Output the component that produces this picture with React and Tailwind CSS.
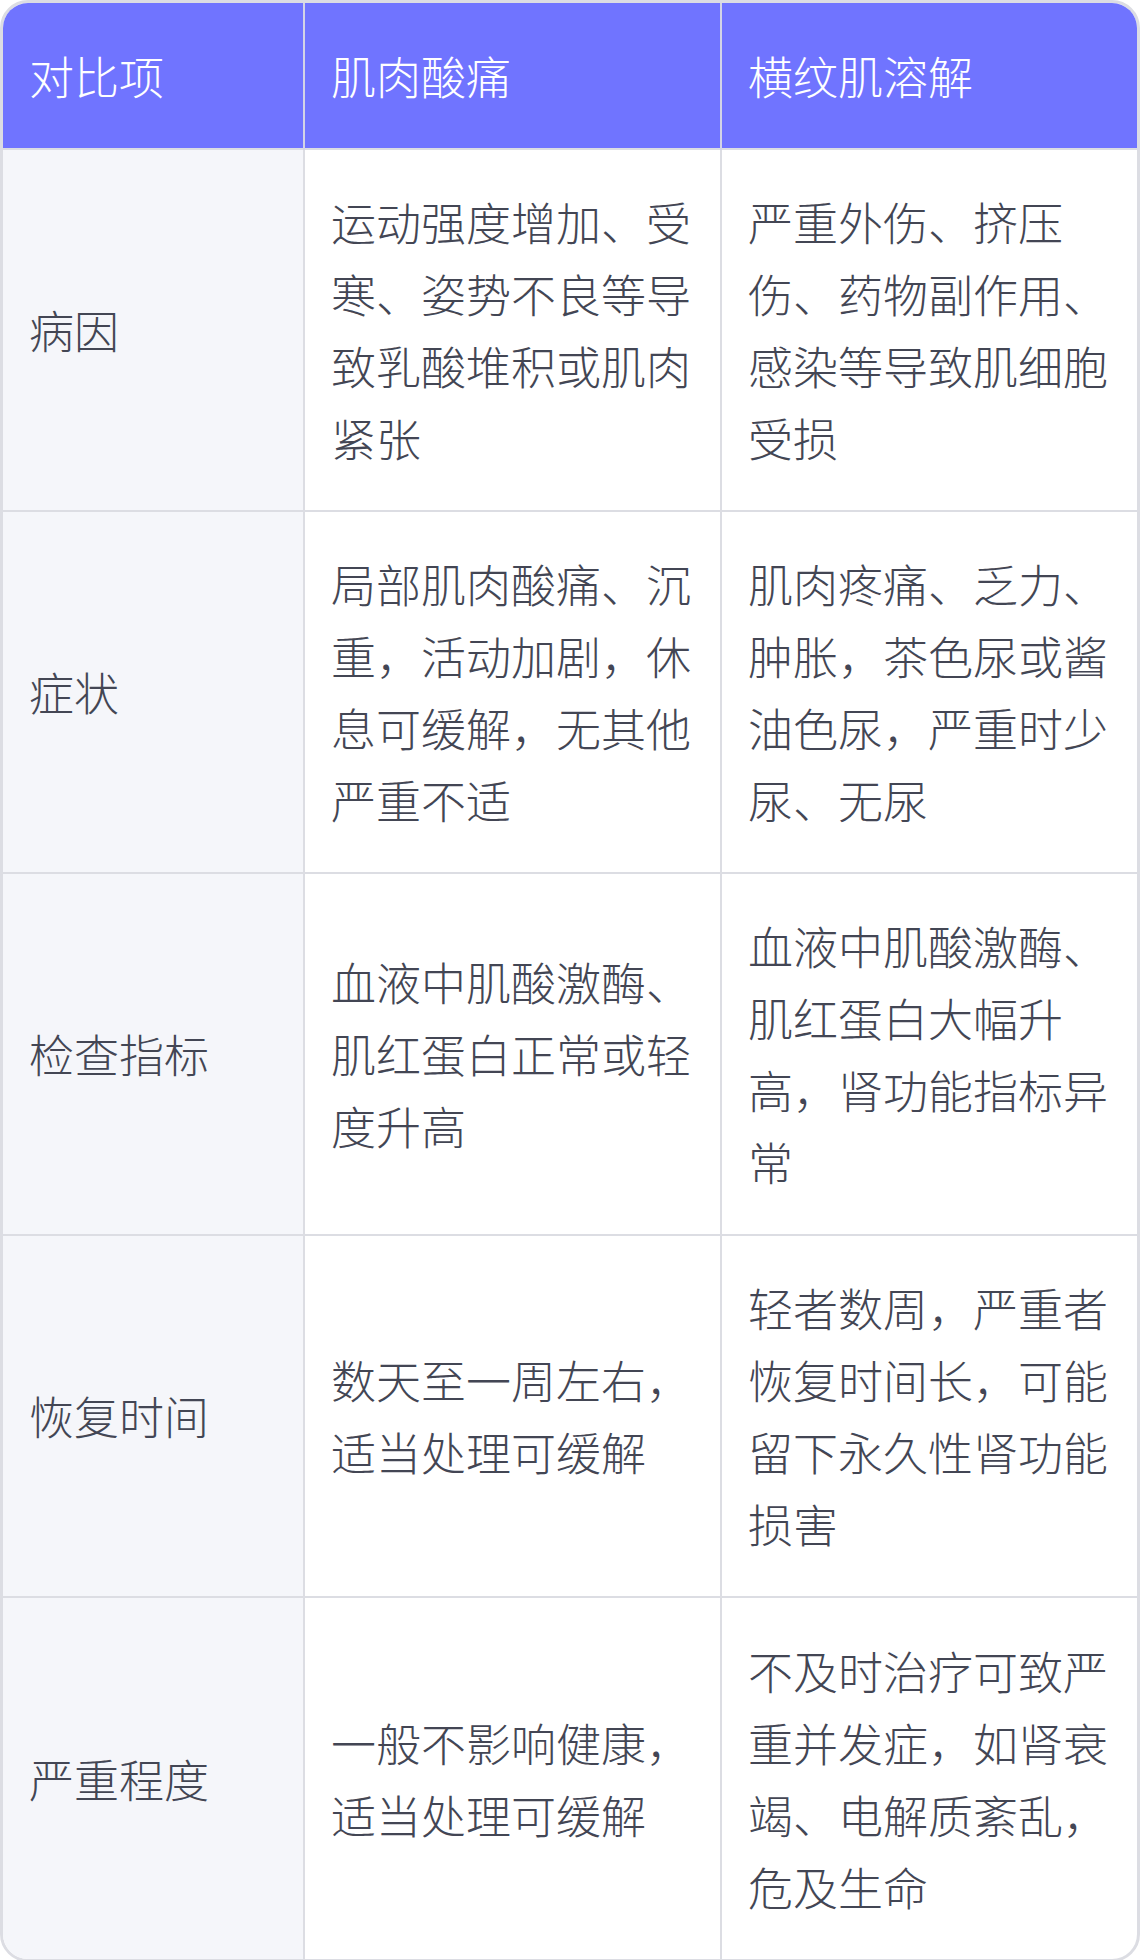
const rows = [
  {
    label: "病因",
    a: "运动强度增加、受寒、姿势不良等导致乳酸堆积或肌肉紧张",
    b: "严重外伤、挤压伤、药物副作用、感染等导致肌细胞受损",
  },
  {
    label: "症状",
    a: "局部肌肉酸痛、沉重，活动加剧，休息可缓解，无其他严重不适",
    b: "肌肉疼痛、乏力、肿胀，茶色尿或酱油色尿，严重时少尿、无尿",
  },
  {
    label: "检查指标",
    a: "血液中肌酸激酶、肌红蛋白正常或轻度升高",
    b: "血液中肌酸激酶、肌红蛋白大幅升高，肾功能指标异常",
  },
  {
    label: "恢复时间",
    a: "数天至一周左右，适当处理可缓解",
    b: "轻者数周，严重者恢复时间长，可能留下永久性肾功能损害",
  },
  {
    label: "严重程度",
    a: "一般不影响健康，适当处理可缓解",
    b: "不及时治疗可致严重并发症，如肾衰竭、电解质紊乱，危及生命",
  },
];

export default function App() {
  return (
    <div className="w-[1140px] bg-white" style={{ fontFamily: '"Noto Sans CJK SC", "Noto Sans", sans-serif' }}>
      <div className="overflow-hidden rounded-[28px] border-[3px] border-[#dcdde3]">
        <table className="w-full table-fixed border-collapse text-[45px] font-light leading-[72px] text-[#434654]">
          <colgroup>
            <col className="w-[301px]" />
            <col className="w-[417px]" />
            <col />
          </colgroup>
          <thead>
            <tr className="bg-[#7074ff] text-white">
              <th className="h-[146px] border-r-2 border-[#d3d4e6] px-[26px] text-left font-light">对比项</th>
              <th className="border-r-2 border-[#d3d4e6] px-[26px] text-left font-light">肌肉酸痛</th>
              <th className="px-[26px] text-left font-light">横纹肌溶解</th>
            </tr>
          </thead>
          <tbody>
            {rows.map((r, i) => (
              <tr key={r.label} className={i < rows.length - 1 ? "border-b-2 border-[#dcdde3]" : ""}>
                <td className="h-[362px] border-r-2 border-t-2 border-[#dcdde3] bg-[#f5f6fa] px-[26px] align-middle">
                  {r.label}
                </td>
                <td className="border-r-2 border-t-2 border-[#dcdde3] px-[26px] align-middle">{r.a}</td>
                <td className="border-t-2 border-[#dcdde3] px-[26px] align-middle">{r.b}</td>
              </tr>
            ))}
          </tbody>
        </table>
      </div>
    </div>
  );
}
